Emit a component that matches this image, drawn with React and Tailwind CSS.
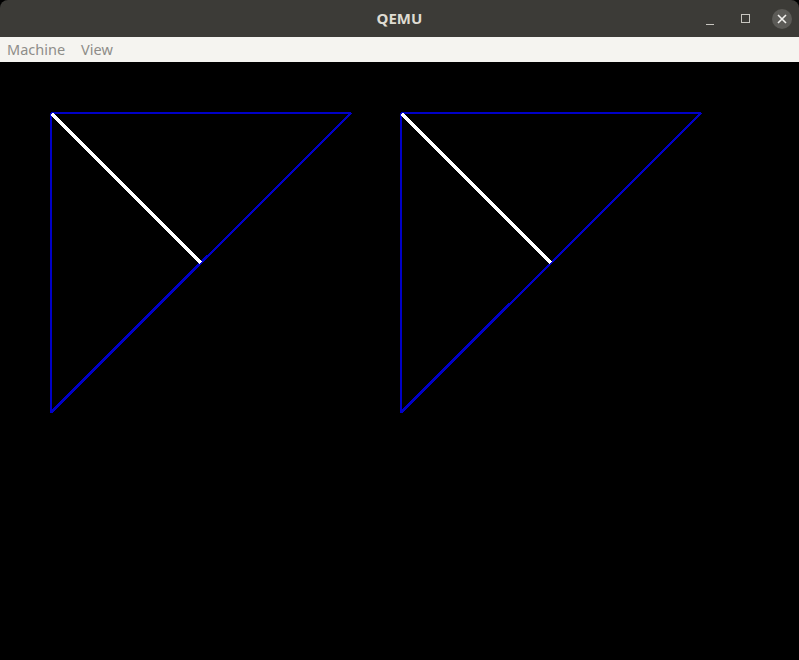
import React from "react";

const Triangle = ({ x }) => (
  <g shapeRendering="crispEdges">
    <line x1={x} y1={51} x2={x + 300} y2={51} stroke="#0000c8" strokeWidth="2" />
    <line x1={x} y1={51} x2={x} y2={351} stroke="#0000c8" strokeWidth="2" />
    <line x1={x + 300} y1={51} x2={x} y2={351} stroke="#0000c8" strokeWidth="2.8" />
    <line x1={x + 1} y1={52} x2={x + 150} y2={201} stroke="#ffffff" strokeWidth="3.4" />
  </g>
);

export default function App() {
  return (
    <div className="w-[799px] h-[660px] flex flex-col bg-black overflow-hidden" style={{ fontFamily: '"Noto Sans", "Open Sans", sans-serif' }}>
      {/* title bar */}
      <div className="h-[37px] bg-[#3c3b37] rounded-t-[8px] flex items-center relative">
        <div className="flex-1 text-center text-[15px] font-bold text-[#dfdbd2]">QEMU</div>
        <div className="absolute right-[7px] top-0 h-[37px] flex items-center gap-[19px]">
          <div className="w-[16px] h-[16px] flex items-end justify-center pb-[2px]">
            <div className="w-[8px] h-[1px] bg-[#c8c6c0]" />
          </div>
          <div className="w-[16px] h-[16px] flex items-center justify-center">
            <div className="w-[9px] h-[9px] border border-[#c8c6c0]" />
          </div>
          <div className="w-[20px] h-[20px] rounded-full bg-[#5c5b57] flex items-center justify-center">
            <svg width="10" height="10" viewBox="0 0 10 10">
              <path d="M1 1L9 9M9 1L1 9" stroke="#f2f1ee" strokeWidth="1.6" />
            </svg>
          </div>
        </div>
      </div>
      {/* menu bar */}
      <div className="h-[25px] bg-[#f5f4f0] flex items-center gap-[16px] px-[7px] text-[14.5px] text-[#8e8d89]">
        <span>Machine</span>
        <span>View</span>
      </div>
      {/* display */}
      <div className="flex-1 bg-black">
        <svg width="799" height="598" viewBox="0 0 799 598" className="block">
          <Triangle x={51} />
          <Triangle x={401} />
        </svg>
      </div>
    </div>
  );
}
